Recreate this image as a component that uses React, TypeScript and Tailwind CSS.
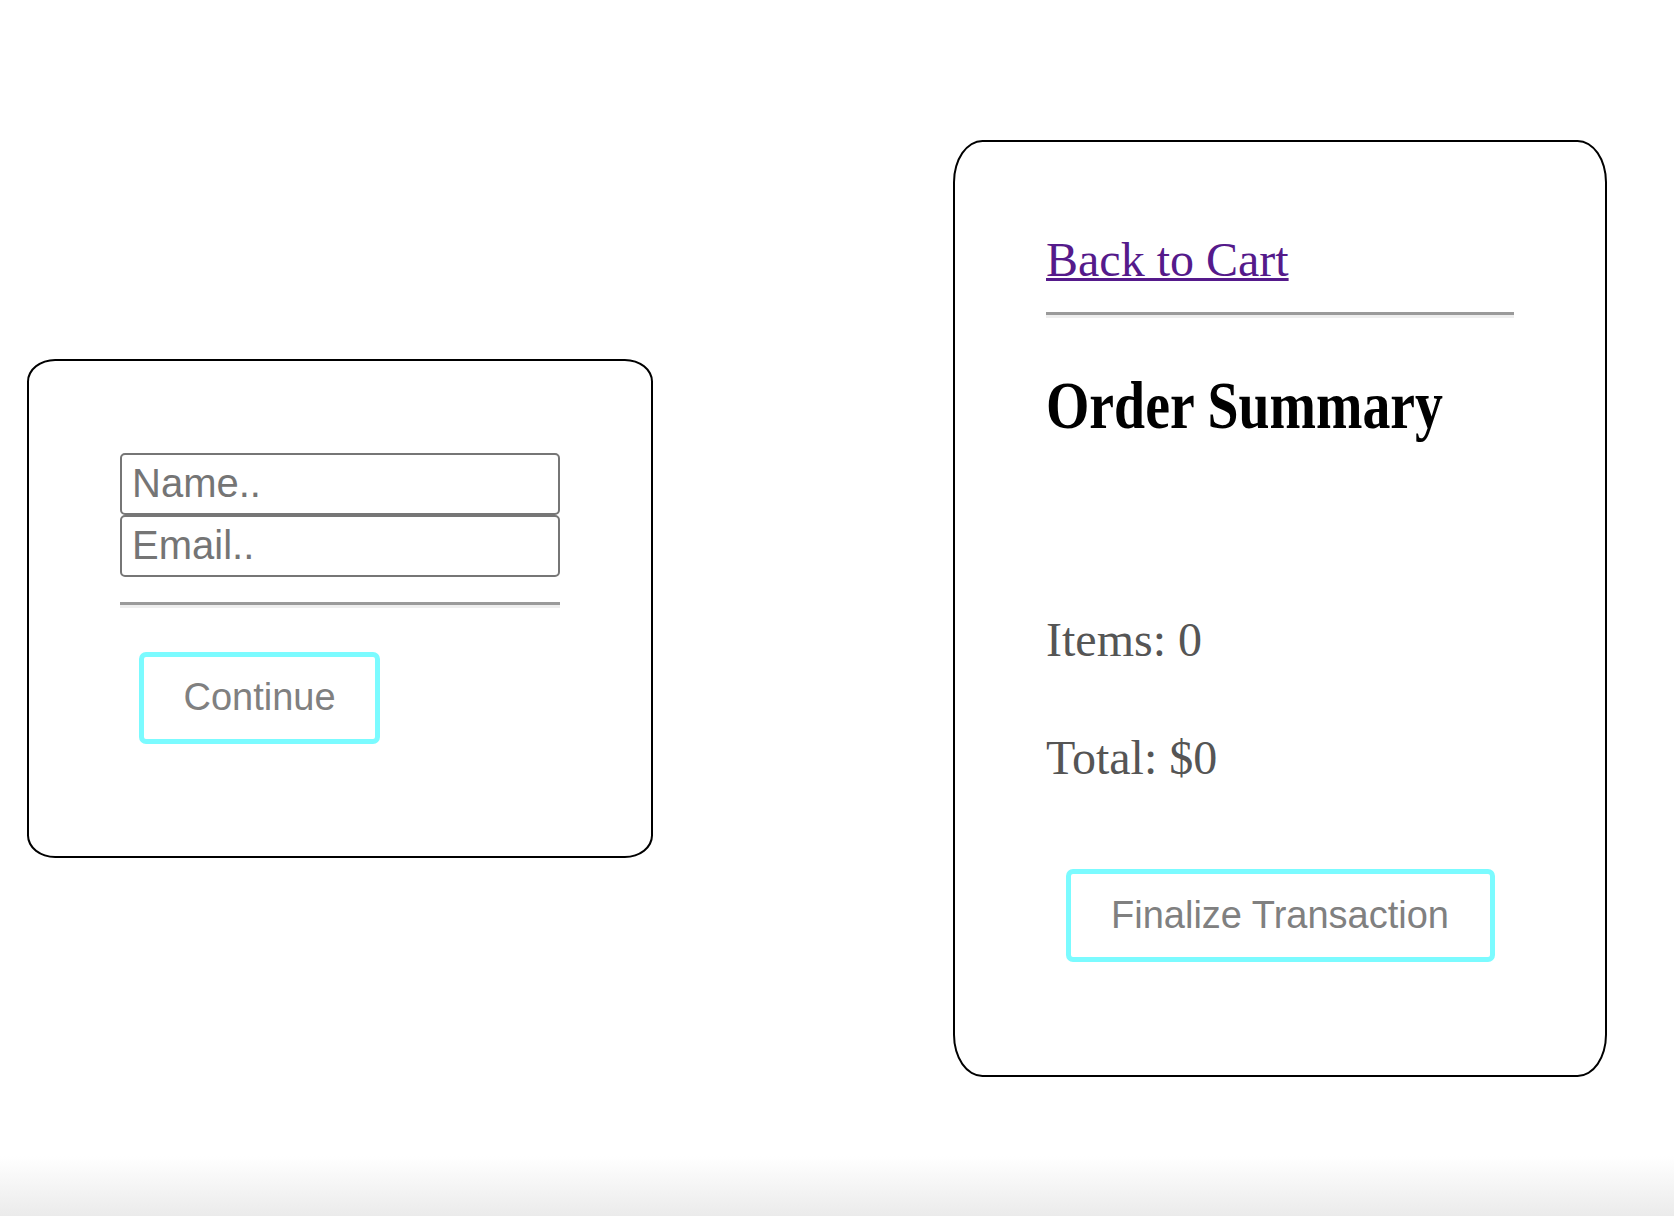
import React from "react";

export default function App() {
  return (
    <div className="relative flex h-[1216px] w-full items-center overflow-hidden bg-white pl-[27px]">
      {/* Left card */}
      <div className="w-[626px] shrink-0 rounded-[4.5%] border-2 border-black px-[91px] pt-[92px] pb-[112px]">
        <input
          placeholder="Name.."
          className="block h-[62px] w-[440px] rounded-[5px] border-2 border-[#767676] bg-white px-[10px] font-['Liberation_Sans',Arial,sans-serif] text-[40px] text-black outline-none placeholder:text-[#757575]"
        />
        <input
          placeholder="Email.."
          className="block h-[62px] w-[440px] rounded-[5px] border-2 border-[#767676] bg-white px-[10px] font-['Liberation_Sans',Arial,sans-serif] text-[40px] text-black outline-none placeholder:text-[#757575]"
        />
        <hr className="mt-[25px] h-0 border-t-[3px] border-b-[3px] border-t-[#9a9a9a] border-b-[#eeeeee]" />
        <button className="mt-[44px] ml-[19px] block h-[92px] w-[241px] rounded-[7px] border-[5px] border-[#7bfbff] bg-white font-['Liberation_Sans',Arial,sans-serif] text-[38px] text-[#808080]">
          Continue
        </button>
      </div>

      {/* Right card */}
      <div className="ml-[300px] w-[654px] shrink-0 rounded-[4.5%] border-2 border-black px-[91px] pt-[90px] pb-[113px] font-['Liberation_Serif','Times_New_Roman',serif]">
        <div className="h-[55px] text-[48px] leading-[55px]">
          <a href="#" className="text-[#551a8b] underline decoration-[2.5px]">
            Back to Cart
          </a>
        </div>
        <hr className="mt-[25px] h-0 border-t-[3px] border-b-[3px] border-t-[#9a9a9a] border-b-[#eeeeee]" />
        <h2 className="mt-[48px] h-[78px] whitespace-nowrap text-[68px] leading-[78px] font-bold text-black">
          <span className="inline-block origin-left scale-x-[0.82]">Order Summary</span>
        </h2>
        <p className="mt-[168px] text-[48px] leading-[55px] text-[#555555]">Items: 0</p>
        <p className="mt-[63px] text-[48px] leading-[55px] text-[#555555]">Total: $0</p>
        <button className="mt-[84px] ml-[19.5px] block h-[93px] w-[429px] rounded-[7px] border-[5px] border-[#7bfbff] bg-white font-['Liberation_Sans',Arial,sans-serif] text-[38px] text-[#808080]">
          Finalize Transaction
        </button>
      </div>

      <div className="pointer-events-none absolute inset-x-0 bottom-0 h-[60px] bg-linear-to-b from-white/0 to-[#ebebeb]" />
    </div>
  );
}
